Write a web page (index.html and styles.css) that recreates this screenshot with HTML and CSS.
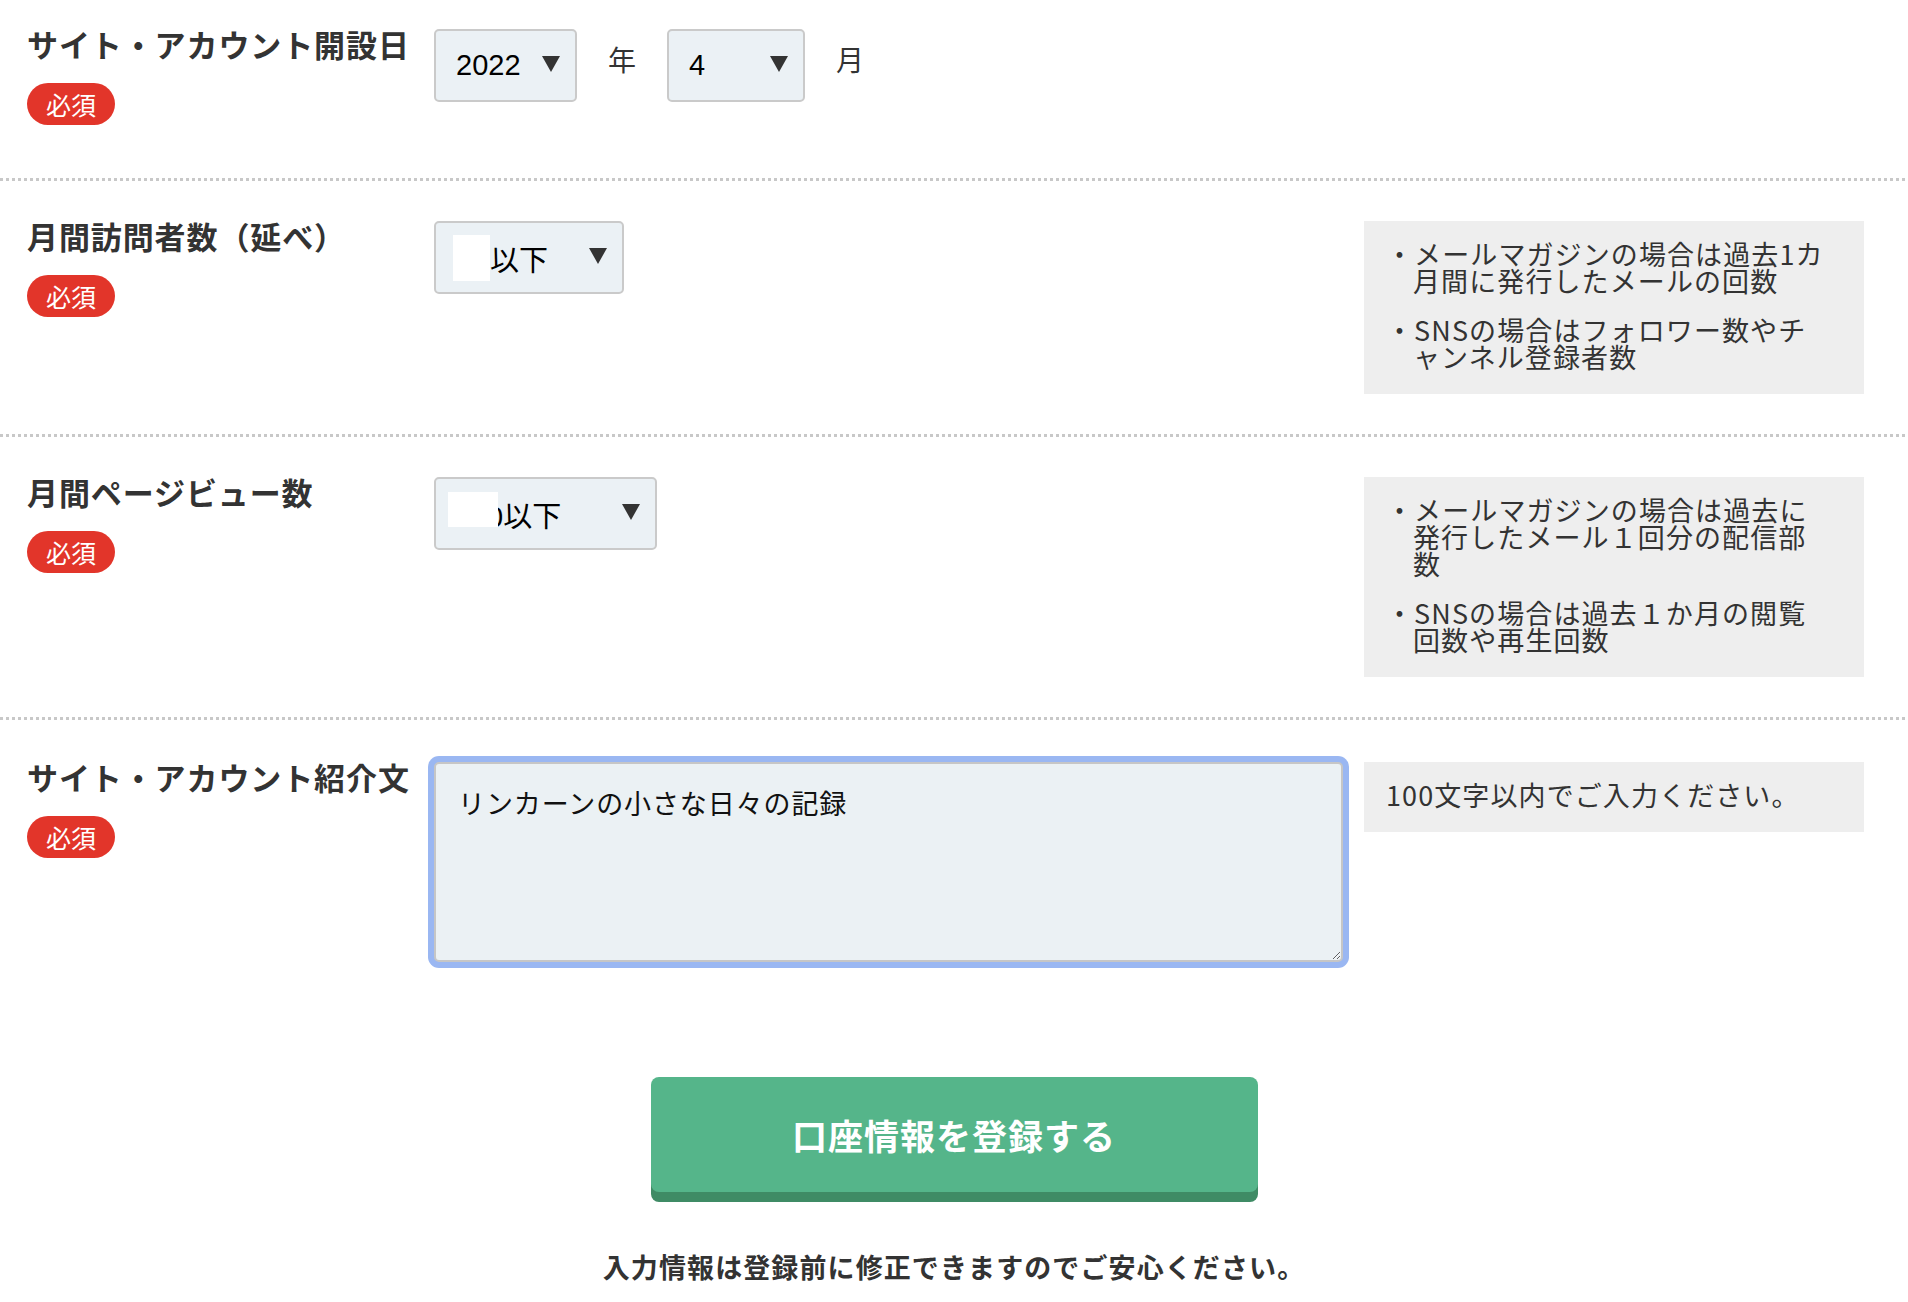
FILE: index.html
```html
<!DOCTYPE html>
<html lang="ja">
<head>
    <meta charset="UTF-8">
    <meta name="viewport" content="width=device-width, initial-scale=1.0">
    <title>サイト・アカウント情報</title>
    <link rel="stylesheet" href="styles.css">
</head>
<body>
    <div class="form">
        <div class="row row-first">
            <div class="label-col">
                <p class="label">サイト・アカウント開設日</p>
                <span class="badge">必須</span>
            </div>
            <div class="field date-field">
                <div class="select select-year">
                    <span class="value">2022</span>
                    <span class="arrow"></span>
                </div>
                <span class="unit">年</span>
                <div class="select select-month">
                    <span class="value">4</span>
                    <span class="arrow"></span>
                </div>
                <span class="unit">月</span>
            </div>
        </div>

        <div class="row">
            <div class="label-col">
                <p class="label">月間訪問者数（延べ）</p>
                <span class="badge">必須</span>
            </div>
            <div class="field">
                <div class="select select-visitors">
                    <span class="value"><span class="mask"></span>以下</span>
                    <span class="arrow"></span>
                </div>
            </div>
            <div class="note">
                <ul>
                    <li>・メールマガジンの場合は過去1カ<br>月間に発行したメールの回数</li>
                    <li>・SNSの場合はフォロワー数やチ<br>ャンネル登録者数</li>
                </ul>
            </div>
        </div>

        <div class="row">
            <div class="label-col">
                <p class="label">月間ページビュー数</p>
                <span class="badge">必須</span>
            </div>
            <div class="field">
                <div class="select select-pv">
                    <span class="value"><span class="mask mask-pv"></span>0以下</span>
                    <span class="arrow"></span>
                </div>
            </div>
            <div class="note">
                <ul>
                    <li>・メールマガジンの場合は過去に<br>発行したメール１回分の配信部<br>数</li>
                    <li>・SNSの場合は過去１か月の閲覧<br>回数や再生回数</li>
                </ul>
            </div>
        </div>

        <div class="row">
            <div class="label-col">
                <p class="label">サイト・アカウント紹介文</p>
                <span class="badge">必須</span>
            </div>
            <div class="field">
                <textarea class="intro-input">リンカーンの小さな日々の記録</textarea>
            </div>
            <div class="note">
                <p>100文字以内でご入力ください。</p>
            </div>
        </div>
    </div>

    <div class="submit-area">
        <button class="submit-btn">口座情報を登録する</button>
        <p class="submit-note">入力情報は登録前に修正できますのでご安心ください。</p>
    </div>
</body>
</html>
```

FILE: styles.css
```css
body {
    margin: 0;
    font-family: "Noto Sans CJK JP", sans-serif;
    color: #333;
    background: #fff;
}
.row {
    display: grid;
    grid-template-columns: 386px 1fr 500px;
    column-gap: 21px;
    align-items: start;
    padding: 43px 44px 40px 27px;
}
.row-first {
    padding-top: 29px;
}
.row + .row {
    background-image: linear-gradient(to right, #c8c8c8 50%, transparent 50%);
    background-size: 6px 3px;
    background-repeat: repeat-x;
    background-position: 0 0;
}
.row:last-child {
    padding-top: 45px;
}
.label-col {
    display: flex;
    flex-direction: column;
    align-items: flex-start;
    padding-bottom: 13px;
}
.label {
    margin: 0;
    font-size: 31px;
    line-height: 30px;
    font-weight: bold;
    letter-spacing: 0.9px;
    white-space: nowrap;
    color: #333;
}
.badge {
    margin-top: 24px;
    height: 42px;
    line-height: 42px;
    padding: 0 19px;
    border-radius: 21px;
    background: #e2352a;
    color: #fff;
    font-size: 25px;
}
.date-field {
    display: flex;
    align-items: flex-start;
}
.unit {
    margin: 16px 31px 0;
    font-size: 28px;
    line-height: 28px;
    color: #333;
}
.select {
    display: flex;
    align-items: center;
    justify-content: space-between;
    box-sizing: border-box;
    height: 73px;
    padding: 0 15px 0 20px;
    background: #ebf1f5;
    border: 2px solid #cacaca;
    border-radius: 5px;
    font-family: "Liberation Sans", "Noto Sans CJK JP", sans-serif;
    font-size: 29px;
    color: #000;
}
.select-year {
    width: 143px;
}
.select-month {
    width: 138px;
}
.select-visitors {
    width: 190px;
    padding-left: 17px;
}
.select-pv {
    width: 223px;
    padding-left: 12px;
}
.value {
    display: flex;
    align-items: center;
}
.mask {
    width: 37px;
    height: 46px;
    background: #fff;
}
.mask-pv {
    position: relative;
    z-index: 1;
    width: 50px;
    height: 35px;
    margin-right: -11px;
    margin-bottom: 9px;
}
.arrow {
    width: 0;
    height: 0;
    border-left: 9px solid transparent;
    border-right: 9px solid transparent;
    border-top: 16px solid #333;
    margin-bottom: 4px;
}
.note {
    background: #eeeeee;
    padding: 19px 20px 24px 22px;
    font-size: 27px;
    line-height: 27px;
    letter-spacing: 1.1px;
    color: #333;
    white-space: nowrap;
}
.note ul {
    list-style: none;
    margin: 0;
    padding: 0;
}
.note li {
    padding-left: 27px;
    text-indent: -27px;
}
.note li + li {
    margin-top: 22px;
}
.note p {
    margin: 0;
}
.intro-input {
    display: block;
    box-sizing: border-box;
    width: 100%;
    height: 200px;
    padding: 21px 22px;
    background: #ebf1f4;
    border: 2px solid #c6c6c6;
    border-radius: 5px;
    box-shadow: 0 0 0 6px #9ab7f2;
    outline: none;
    resize: vertical;
    font-family: "Noto Sans CJK JP", sans-serif;
    font-size: 27px;
    line-height: 36px;
    letter-spacing: 0.9px;
    color: #111;
}
.submit-area {
    padding-top: 75px;
    text-align: center;
}
.submit-btn {
    display: block;
    width: 607px;
    height: 115px;
    margin: 0 auto;
    background: #55b58a;
    border: none;
    border-radius: 8px;
    box-shadow: 0 10px 0 #3f8b65;
    color: #fff;
    font-family: "Noto Sans CJK JP", sans-serif;
    font-size: 35px;
    font-weight: bold;
    letter-spacing: 1px;
    cursor: pointer;
}
.submit-note {
    margin: 57px 0 0;
    font-size: 27px;
    line-height: 36px;
    font-weight: bold;
    letter-spacing: 1.1px;
    color: #333;
}
```
